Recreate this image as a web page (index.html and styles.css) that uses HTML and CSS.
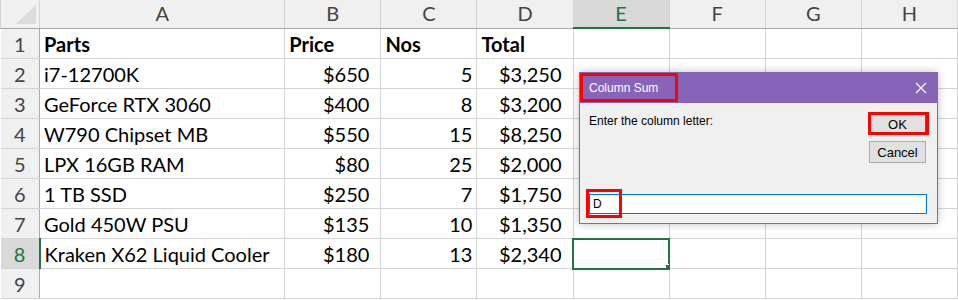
FILE: index.html
```html
<!DOCTYPE html>
<html lang="en">
<head>
    <meta charset="UTF-8">
    <meta name="viewport" content="width=device-width, initial-scale=1.0">
    <title>Column Sum</title>
    <link rel="stylesheet" href="styles.css">
</head>
<body>

<table class="sheet">
    <colgroup>
        <col class="c-row"><col class="c-a"><col class="c-n"><col class="c-n"><col class="c-n"><col class="c-n"><col class="c-n"><col class="c-n"><col class="c-n">
    </colgroup>
    <tr class="head">
        <th class="corner"><span class="tri"></span></th>
        <th>A</th><th>B</th><th>C</th><th>D</th><th class="sel">E</th><th>F</th><th>G</th><th>H</th>
    </tr>
    <tr>
        <th class="rn">1</th>
        <td class="b">Parts</td><td class="b">Price</td><td class="b">Nos</td><td class="b">Total</td><td></td><td></td><td></td><td></td>
    </tr>
    <tr>
        <th class="rn">2</th>
        <td>i7-12700K</td><td class="cur">$650</td><td class="num">5</td><td class="cur">$3,250</td><td></td><td></td><td></td><td></td>
    </tr>
    <tr>
        <th class="rn">3</th>
        <td>GeForce RTX 3060</td><td class="cur">$400</td><td class="num">8</td><td class="cur">$3,200</td><td></td><td></td><td></td><td></td>
    </tr>
    <tr>
        <th class="rn">4</th>
        <td>W790 Chipset MB</td><td class="cur">$550</td><td class="num">15</td><td class="cur">$8,250</td><td></td><td></td><td></td><td></td>
    </tr>
    <tr>
        <th class="rn">5</th>
        <td>LPX 16GB RAM</td><td class="cur">$80</td><td class="num">25</td><td class="cur">$2,000</td><td></td><td></td><td></td><td></td>
    </tr>
    <tr>
        <th class="rn">6</th>
        <td>1 TB SSD</td><td class="cur">$250</td><td class="num">7</td><td class="cur">$1,750</td><td></td><td></td><td></td><td></td>
    </tr>
    <tr>
        <th class="rn">7</th>
        <td>Gold 450W PSU</td><td class="cur">$135</td><td class="num">10</td><td class="cur">$1,350</td><td></td><td></td><td></td><td></td>
    </tr>
    <tr>
        <th class="rn sel">8</th>
        <td>Kraken X62 Liquid Cooler</td><td class="cur">$180</td><td class="num">13</td><td class="cur">$2,340</td><td class="active"><span class="handle"></span></td><td></td><td></td><td></td>
    </tr>
    <tr>
        <th class="rn">9</th>
        <td></td><td></td><td></td><td></td><td></td><td></td><td></td><td></td>
    </tr>
</table>

<div class="dialog">
    <div class="title-bar">
        <span class="title">Column Sum</span>
        <svg class="close" width="12" height="12" viewBox="0 0 12 12">
            <path d="M1 1 L11 11 M11 1 L1 11" stroke="#fff" stroke-width="1.2" fill="none"/>
        </svg>
    </div>
    <div class="dialog-body">
        <div class="top">
            <span class="prompt">Enter the column letter:</span>
            <div class="buttons">
                <button class="btn btn-ok">OK</button>
                <button class="btn">Cancel</button>
            </div>
        </div>
        <div class="input">D</div>
    </div>
    <!-- red annotation boxes -->
    <span class="mark mark-title"></span>
    <span class="mark mark-ok"></span>
    <span class="mark mark-input"></span>
</div>

</body>
</html>
```

FILE: styles.css
```css
body {
    margin: 0;
    background: #fff;
    font-family: "Lato", "Liberation Sans", sans-serif;
}
.sheet {
    border-collapse: collapse;
    table-layout: fixed;
    width: 958px;
    font-size: 20px;
    color: #000;
}
.c-row { width: 39px; }
.c-a { width: 245px; }
.c-n { width: 96px; }
.sheet td, .sheet th {
    border: 1px solid #d4d4d4;
    height: 29px;
    padding: 0 4px;
    white-space: nowrap;
    overflow: hidden;
    vertical-align: bottom;
    line-height: 27px;
}
.sheet tr.head th {
    height: 27px;
    background: #f0f0f0;
    font-weight: normal;
    color: #444;
    text-align: center;
    vertical-align: middle;
    border-color: #d4d4d4;
    border-bottom-color: #ababab;
    border-top: none;
}
.sheet th.rn {
    background: #f0f0f0;
    font-weight: normal;
    color: #444;
    text-align: center;
    border-left: none;
    border-right-color: #ababab;
    padding: 0;
}
.sheet tr.head th.sel {
    background: #d9d9d9;
    color: #217346;
    border-bottom: 2px solid #217346;
}
.sheet th.rn.sel {
    background: #d9d9d9;
    color: #217346;
    border-right: 2px solid #217346;
}
.corner {
    position: relative;
    border-left: none;
}
.tri {
    position: absolute;
    right: 3px;
    bottom: 4px;
    width: 0;
    height: 0;
    border-left: 20px solid transparent;
    border-bottom: 19px solid #dcdcdc;
}
.b { font-weight: bold; }
.num { text-align: right; }
.cur { text-align: right; padding-right: 11px !important; }
.active {
    position: relative;
    outline: 2px solid #217346;
    outline-offset: -1px;
}
.handle {
    position: absolute;
    right: -4px;
    bottom: -4px;
    width: 6px;
    height: 6px;
    background: #217346;
    border: 1px solid #fff;
}

.dialog {
    position: absolute;
    left: 579px;
    top: 72px;
    width: 357px;
    height: 150px;
    border: 1px solid #8764b8;
    background: #f0f0f0;
    box-shadow: 0 0 8px rgba(0, 0, 0, 0.25);
    font-family: "Liberation Sans", sans-serif;
    font-size: 12px;
    color: #000;
}
.title-bar {
    height: 30px;
    background: #8764b8;
    display: flex;
    align-items: center;
    justify-content: space-between;
    padding: 0 10px 0 9px;
}
.title { color: #fff; }
.dialog-body {
    padding: 10px 10px 0 9px;
}
.top {
    display: flex;
    justify-content: space-between;
}
.prompt { padding-top: 1px; }
.buttons {
    display: flex;
    flex-direction: column;
    gap: 6px;
    padding-right: 1px;
}
.btn {
    width: 57px;
    height: 22px;
    background: #e1e1e1;
    border: 1px solid #adadad;
    font-family: "Liberation Sans", sans-serif;
    font-size: 13px;
    color: #000;
    padding: 0;
}
.btn-ok {
    border-color: #0078d7;
}
.input {
    margin-top: 31px;
    height: 20px;
    box-sizing: border-box;
    border: 1px solid #0078d7;
    background: #fff;
    line-height: 18px;
    padding-left: 3px;
}
.mark {
    position: absolute;
    border: 3px solid #ff0000;
    box-sizing: border-box;
}
.mark-title { left: 0; top: 0; width: 98px; height: 29px; }
.mark-ok { left: 288px; top: 39px; width: 61px; height: 23px; }
.mark-input { left: 6px; top: 116px; width: 36px; height: 29px; }
```
